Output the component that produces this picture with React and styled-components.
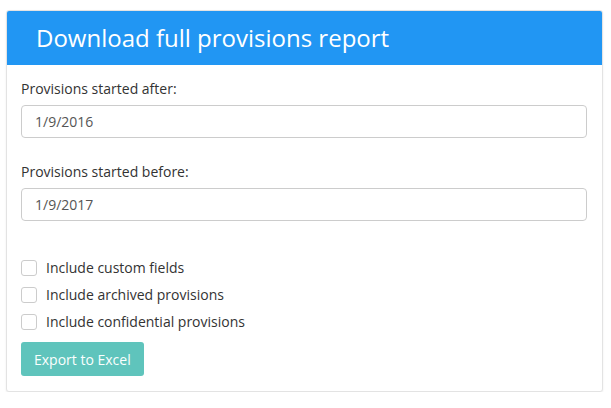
import React, { useState } from "react";
import styled, { createGlobalStyle } from "styled-components";

const GlobalStyle = createGlobalStyle`
  body {
    margin: 0;
    background: #ffffff;
    font-family: "Open Sans", "Liberation Sans", sans-serif;
  }
`;

const Page = styled.div`
  padding: 10px 8px 0 6px;
`;

const Panel = styled.div`
  width: 597px;
  border: 1px solid #e3e3e3;
  border-radius: 3px;
  box-shadow: 0 1px 2px rgba(0, 0, 0, 0.08);
  background: #fff;
  box-sizing: border-box;
  overflow: hidden;
`;

const Header = styled.div`
  height: 55px;
  background: #2196f3;
  color: #fff;
  display: flex;
  align-items: center;
  padding-left: 30px;
  margin: -1px -1px 0;
  font-size: 24px;
`;

const Body = styled.div`
  padding: 14px 15px 15px 14px;
`;

const Field = styled.div`
  margin-bottom: 24px;
`;

const Label = styled.label`
  display: block;
  font-size: 14px;
  color: #333;
  margin-bottom: 7px;
`;

const Input = styled.input`
  display: block;
  width: 100%;
  height: 33px;
  box-sizing: border-box;
  border: 1px solid #ccc;
  border-radius: 4px;
  padding: 0 13px;
  font-family: inherit;
  font-size: 14px;
  color: #555;
`;

const Options = styled.div`
  margin-top: 38px;
  display: flex;
  flex-direction: column;
  gap: 10px;
`;

const CheckRow = styled.label`
  display: flex;
  align-items: center;
  gap: 9px;
  font-size: 14px;
  color: #333;
  height: 17px;
`;

const Box = styled.span`
  width: 16px;
  height: 16px;
  box-sizing: border-box;
  border: 1px solid #ccc;
  border-radius: 3px;
  background: ${(p) => (p.checked ? "#2196f3" : "#fff")};
`;

const Button = styled.button`
  margin-top: 12px;
  height: 34px;
  padding: 0 13px;
  background: #5fc4bc;
  border: none;
  border-radius: 3px;
  color: #fbfffe;
  font-family: inherit;
  font-size: 14px;
`;

const options = [
  "Include custom fields",
  "Include archived provisions",
  "Include confidential provisions",
];

export default function App() {
  const [checked, setChecked] = useState([false, false, false]);

  return (
    <Page>
      <GlobalStyle />
      <Panel>
        <Header>Download full provisions report</Header>
        <Body>
          <Field>
            <Label>Provisions started after:</Label>
            <Input defaultValue="1/9/2016" />
          </Field>
          <Field>
            <Label>Provisions started before:</Label>
            <Input defaultValue="1/9/2017" />
          </Field>
          <Options>
            {options.map((text, i) => (
              <CheckRow
                key={text}
                onClick={() => setChecked(checked.map((c, j) => (j === i ? !c : c)))}
              >
                <Box checked={checked[i]} />
                {text}
              </CheckRow>
            ))}
          </Options>
          <Button>Export to Excel</Button>
        </Body>
      </Panel>
    </Page>
  );
}
